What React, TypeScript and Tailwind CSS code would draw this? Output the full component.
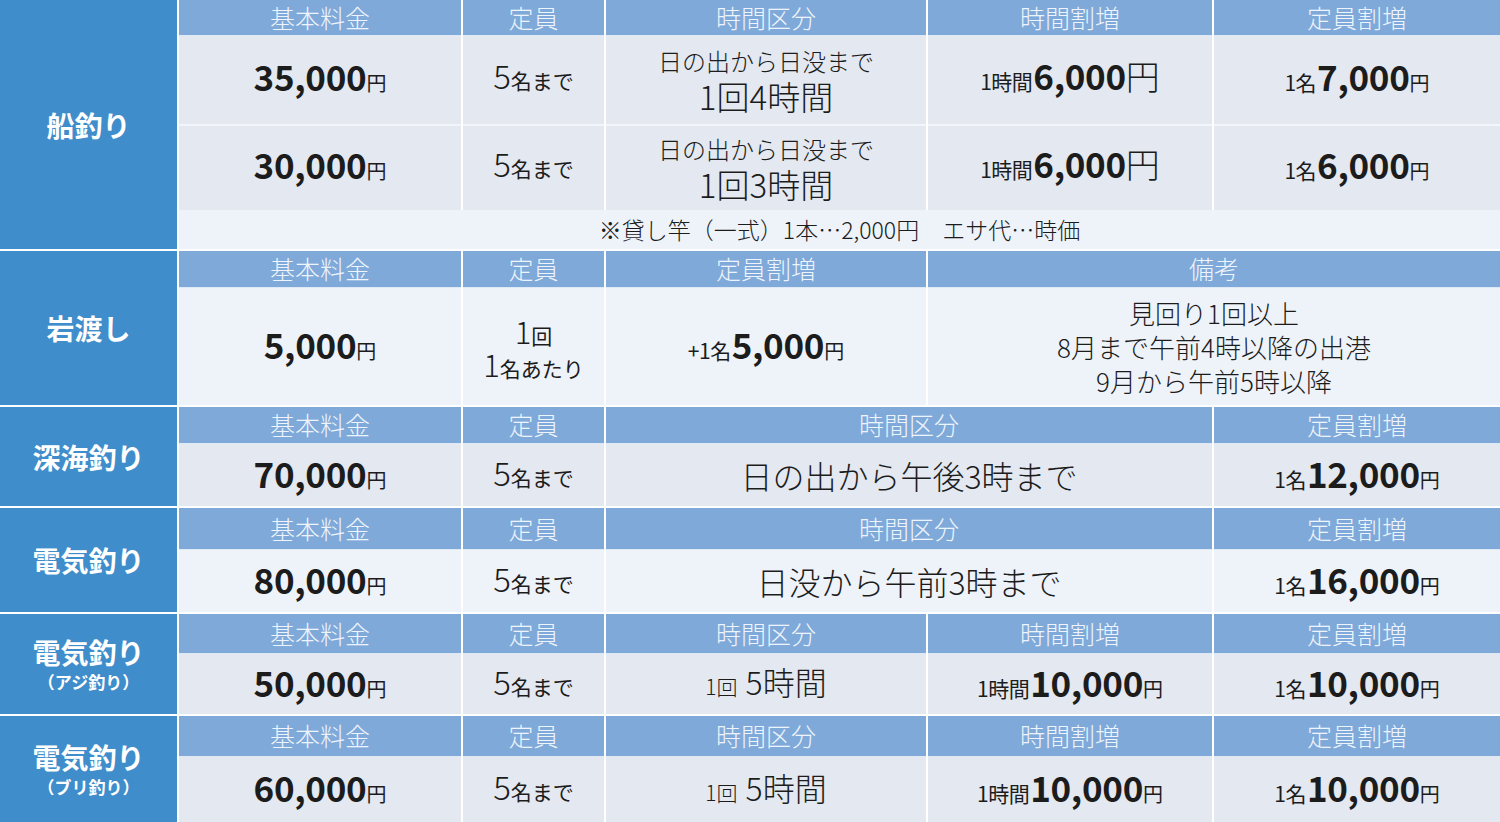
import React from "react";

const FONT = "font-['Noto_Sans_CJK_JP','Noto_Sans',sans-serif]";
const HEAD = "bg-[#7ea9d9] text-[#eef4fb] text-[25px] font-light flex items-center justify-center border-b border-[#dfe9f5]";
const DARK = "bg-[#e3e8f1]";
const LIGHT = "bg-[#eef3fa]";
const CELL = "flex items-center justify-center text-[#1c1c1c] leading-none";
const NUM = "flex items-center justify-center text-[#1c1c1c] leading-none pb-[6px]";
const NUM1 = "flex items-center justify-center text-[#1c1c1c] leading-none pb-[10px]";

function Yen({ n, yenBig = false }: { n: string; yenBig?: boolean }) {
  return (
    <span className="inline-flex items-baseline">
      <span className="font-bold text-[35px] tracking-[-0.3px]">{n}</span>
      <span className={yenBig ? "text-[34px] font-light" : "text-[20px]"}>円</span>
    </span>
  );
}

function Cap() {
  return (
    <span className="inline-flex items-baseline">
      <span className="text-[33px] font-light">5</span>
      <span className="text-[21px]">名まで</span>
    </span>
  );
}

function Per({ label, n, yenBig = false }: { label: string; n: string; yenBig?: boolean }) {
  return (
    <span className="inline-flex items-baseline">
      <span className="text-[21px] tracking-[-0.5px] mr-[1px]">{label}</span>
      <Yen n={n} yenBig={yenBig} />
    </span>
  );
}

function Left({ title, sub, span }: { title: string; sub?: string; span: string }) {
  return (
    <div className={`${span} bg-[#3f8dcb] flex flex-col items-center justify-center text-white`}>
      <div className="text-[28px] font-bold leading-[34px]">{title}</div>
      {sub && <div className="text-[17px] font-bold leading-[22px] mt-[2px]">{sub}</div>}
    </div>
  );
}

function Hours() {
  return (
    <span className="inline-flex items-baseline gap-[8px]">
      <span className="text-[21px] font-light">1回</span>
      <span className="text-[32px] font-light">5時間</span>
    </span>
  );
}

function TwoLine({ second, extra = "" }: { second: string; extra?: string }) {
  return (
    <div className={`${CELL} ${DARK} flex-col ${extra}`}>
      <div className="text-[24px] leading-[32px] font-light">日の出から日没まで</div>
      <div className="text-[33px] leading-[38px] font-light">{second}</div>
    </div>
  );
}

const GRID = "grid grid-cols-[177px_282px_141px_320px_284px_1fr] gap-x-[2px] bg-white";
const SEP = "border-t-2 border-[#f2f5fa]";

export default function App() {
  return (
    <div className={`${FONT} w-[1500px] h-[822px] bg-white flex flex-col gap-[2px] overflow-hidden`}>
      {/* 船釣り */}
      <div className={`${GRID} grid-rows-[36px_88px_86px_39px]`}>
        <Left title="船釣り" span="row-span-4" />
        <div className={HEAD}>基本料金</div>
        <div className={HEAD}>定員</div>
        <div className={HEAD}>時間区分</div>
        <div className={HEAD}>時間割増</div>
        <div className={HEAD}>定員割増</div>

        <div className={`${NUM1} ${DARK}`}><Yen n="35,000" /></div>
        <div className={`${NUM1} ${DARK}`}><Cap /></div>
        <TwoLine second="1回4時間" />
        <div className={`${NUM1} ${DARK}`}><Per label="1時間" n="6,000" yenBig /></div>
        <div className={`${NUM1} ${DARK}`}><Per label="1名" n="7,000" /></div>

        <div className={`${NUM1} ${DARK} ${SEP}`}><Yen n="30,000" /></div>
        <div className={`${NUM1} ${DARK} ${SEP}`}><Cap /></div>
        <TwoLine second="1回3時間" extra={SEP} />
        <div className={`${NUM1} ${DARK} ${SEP}`}><Per label="1時間" n="6,000" yenBig /></div>
        <div className={`${NUM1} ${DARK} ${SEP}`}><Per label="1名" n="6,000" /></div>

        <div className={`${CELL} ${LIGHT} col-span-5 text-[23px] font-light`}>
          ※貸し竿（一式）1本…2,000円　エサ代…時価
        </div>
      </div>

      {/* 岩渡し */}
      <div className={`${GRID} grid-rows-[37px_117px]`}>
        <Left title="岩渡し" span="row-span-2" />
        <div className={HEAD}>基本料金</div>
        <div className={HEAD}>定員</div>
        <div className={HEAD}>定員割増</div>
        <div className={`${HEAD} col-span-2`}>備考</div>

        <div className={`${NUM} ${LIGHT}`}><Yen n="5,000" /></div>
        <div className={`${CELL} ${LIGHT} flex-col gap-[2px]`}>
          <span className="inline-flex items-baseline">
            <span className="text-[31px] font-light">1</span>
            <span className="text-[21px]">回</span>
          </span>
          <span className="inline-flex items-baseline">
            <span className="text-[31px] font-light">1</span>
            <span className="text-[21px]">名あたり</span>
          </span>
        </div>
        <div className={`${NUM} ${LIGHT}`}><Per label="+1名" n="5,000" /></div>
        <div className={`${CELL} ${LIGHT} col-span-2 flex-col text-[26px] font-light`}>
          <div className="leading-[34px]">見回り1回以上</div>
          <div className="leading-[34px]">8月まで午前4時以降の出港</div>
          <div className="leading-[34px]">9月から午前5時以降</div>
        </div>
      </div>

      {/* 深海釣り */}
      <div className={`${GRID} grid-rows-[37px_62px]`}>
        <Left title="深海釣り" span="row-span-2" />
        <div className={HEAD}>基本料金</div>
        <div className={HEAD}>定員</div>
        <div className={`${HEAD} col-span-2`}>時間区分</div>
        <div className={HEAD}>定員割増</div>

        <div className={`${NUM} ${DARK}`}><Yen n="70,000" /></div>
        <div className={`${NUM} ${DARK}`}><Cap /></div>
        <div className={`${CELL} ${DARK} col-span-2 text-[32px] font-light`}>日の出から午後3時まで</div>
        <div className={`${NUM} ${DARK}`}><Per label="1名" n="12,000" /></div>
      </div>

      {/* 電気釣り */}
      <div className={`${GRID} grid-rows-[42px_62px]`}>
        <Left title="電気釣り" span="row-span-2" />
        <div className={HEAD}>基本料金</div>
        <div className={HEAD}>定員</div>
        <div className={`${HEAD} col-span-2`}>時間区分</div>
        <div className={HEAD}>定員割増</div>

        <div className={`${NUM} ${LIGHT}`}><Yen n="80,000" /></div>
        <div className={`${NUM} ${LIGHT}`}><Cap /></div>
        <div className={`${CELL} ${LIGHT} col-span-2 text-[32px] font-light`}>日没から午前3時まで</div>
        <div className={`${NUM} ${LIGHT}`}><Per label="1名" n="16,000" /></div>
      </div>

      {/* 電気釣り（アジ釣り） */}
      <div className={`${GRID} grid-rows-[40px_60px]`}>
        <Left title="電気釣り" sub="（アジ釣り）" span="row-span-2" />
        <div className={HEAD}>基本料金</div>
        <div className={HEAD}>定員</div>
        <div className={HEAD}>時間区分</div>
        <div className={HEAD}>時間割増</div>
        <div className={HEAD}>定員割増</div>

        <div className={`${NUM} ${DARK}`}><Yen n="50,000" /></div>
        <div className={`${NUM} ${DARK}`}><Cap /></div>
        <div className={`${NUM} ${DARK}`}><Hours /></div>
        <div className={`${NUM} ${DARK}`}><Per label="1時間" n="10,000" /></div>
        <div className={`${NUM} ${DARK}`}><Per label="1名" n="10,000" /></div>
      </div>

      {/* 電気釣り（ブリ釣り） */}
      <div className={`${GRID} grid-rows-[41px_65px]`}>
        <Left title="電気釣り" sub="（ブリ釣り）" span="row-span-2" />
        <div className={HEAD}>基本料金</div>
        <div className={HEAD}>定員</div>
        <div className={HEAD}>時間区分</div>
        <div className={HEAD}>時間割増</div>
        <div className={HEAD}>定員割増</div>

        <div className={`${NUM} ${DARK}`}><Yen n="60,000" /></div>
        <div className={`${NUM} ${DARK}`}><Cap /></div>
        <div className={`${NUM} ${DARK}`}><Hours /></div>
        <div className={`${NUM} ${DARK}`}><Per label="1時間" n="10,000" /></div>
        <div className={`${NUM} ${DARK}`}><Per label="1名" n="10,000" /></div>
      </div>
    </div>
  );
}
